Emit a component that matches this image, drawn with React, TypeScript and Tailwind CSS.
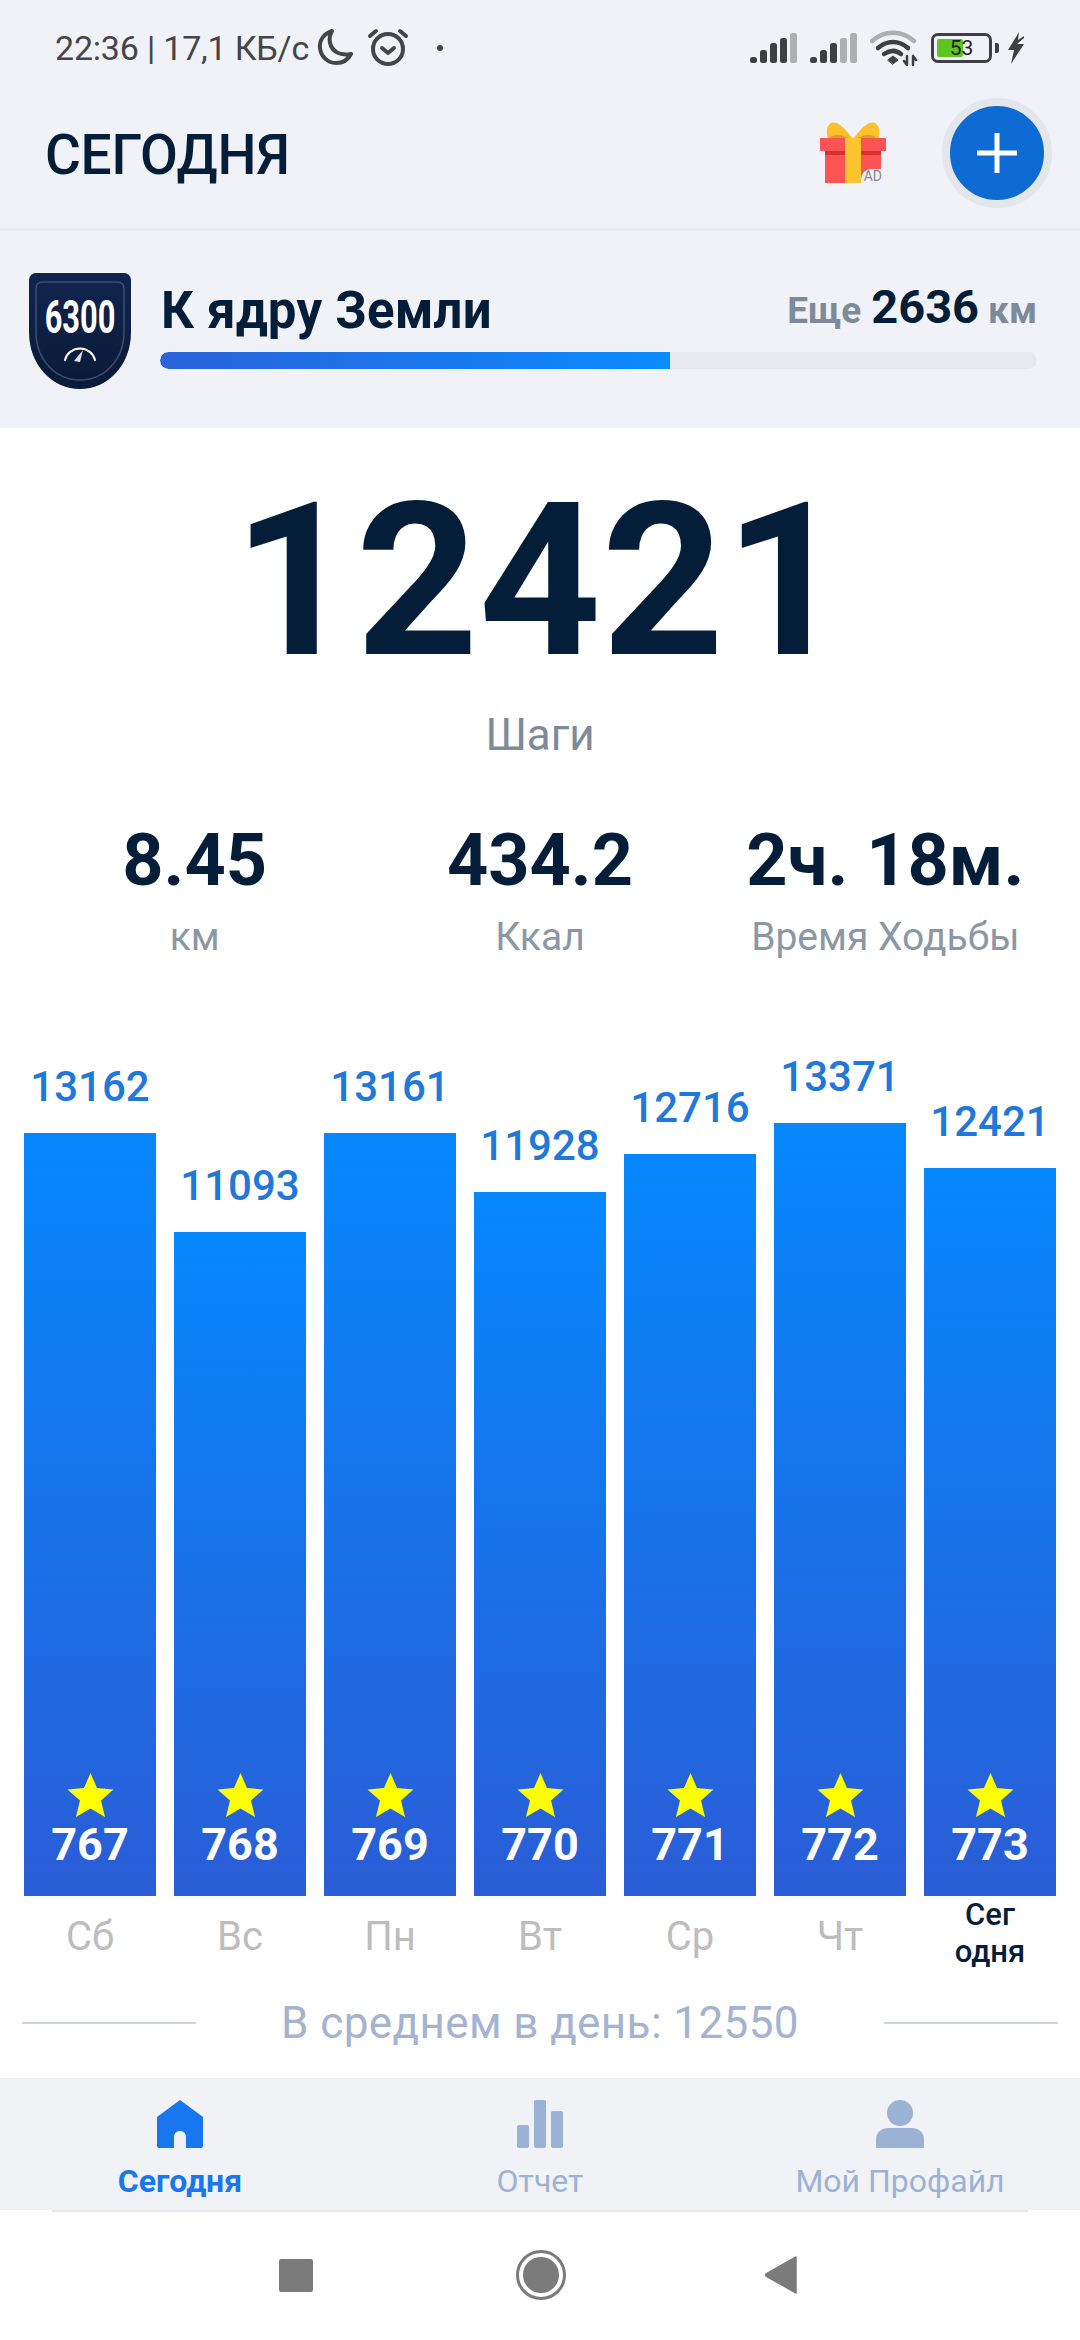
const days = [
  { label: "Сб", steps: 13162, num: 767 },
  { label: "Вс", steps: 11093, num: 768 },
  { label: "Пн", steps: 13161, num: 769 },
  { label: "Вт", steps: 11928, num: 770 },
  { label: "Ср", steps: 12716, num: 771 },
  { label: "Чт", steps: 13371, num: 772 },
  { label: "Сегодня", steps: 12421, num: 773 },
];

const stats = [
  { value: "8.45", label: "км" },
  { value: "434.2", label: "Ккал" },
  { value: "2ч. 18м.", label: "Время Ходьбы" },
];

function barHeight(steps: number) {
  return Math.round(763 - (13162 - steps) * 0.0478);
}

function Signal({ active }: { active: number }) {
  const heights = [6, 13, 20, 25, 30];
  return (
    <svg width="47" height="32" viewBox="0 0 47 32">
      {heights.map((h, i) => (
        <rect key={h} x={i * 10} y={31 - h} width="7" height={h} rx="2.500" fill={i < active ? "#3d3f42" : "#adafb2"} />
      ))}
    </svg>
  );
}

function StatusBar() {
  return (
    <div className="flex h-[92px] items-center justify-between pl-[55px] pr-[55px] pt-1 text-[#444548]">
      <div className="flex items-center">
        <span className="text-[34px] leading-none tracking-[-0.2px]">22:36 | 17,1 КБ/с</span>
        <svg className="ml-2 mt-[-2px]" width="36" height="38" viewBox="0 0 36 38" fill="none" stroke="#444548" strokeWidth="4">
          <path d="M15 3C6 6 2 13 3 20c1 9 8 15 16 15 7 0 12-3 15-9-10 2-17-2-20-8-2-5-2-10 1-15Z" strokeLinejoin="round" />
        </svg>
        <svg className="ml-[14px] mt-[-2px]" width="42" height="38" viewBox="0 0 42 38" fill="none" stroke="#444548" strokeWidth="4" strokeLinecap="round">
          <circle cx="21" cy="21" r="15" />
          <path d="M15 20l6 5 6-5" strokeLinejoin="round" />
          <path d="M3 8l6-5M39 8l-6-5" />
        </svg>
        <span className="ml-[28px] h-[6px] w-[6px] rounded-full bg-[#444548]" />
      </div>
      <div className="flex items-center">
        <Signal active={4} />
        <span className="ml-[13px]"><Signal active={3} /></span>
        <svg className="ml-[13px]" width="48" height="36" viewBox="0 0 48 36" fill="none" strokeLinecap="round">
          <path d="M2 11C14 0 32 0 44 11" stroke="#adafb2" strokeWidth="4.500" />
          <path d="M8 18c9-8 21-8 30 0" stroke="#3d3f42" strokeWidth="4.500" />
          <path d="M14 24c6-4 12-4 17 0" stroke="#3d3f42" strokeWidth="4.500" />
          <path d="M18 30l5-4 5 4-5 4z" fill="#3d3f42" stroke="#3d3f42" strokeWidth="1" />
          <path d="M37 26v9M43 35v-9M34 31l3 4M46 30l-3-4" stroke="#3d3f42" strokeWidth="2.500" />
        </svg>
        <div className="relative ml-[13px] flex h-[30px] w-[61px] items-center rounded-[7px] border-[3px] border-[#3d3f42] p-[3px]">
          <div className="h-full w-[26px] rounded-[2px] bg-[#5fc322]" />
          <span className="absolute inset-0 flex items-center justify-center text-[21px] leading-none text-[#222]">53</span>
        </div>
        <span className="ml-[3px] h-[10px] w-[4px] rounded-r-[2px] bg-[#3d3f42]" />
        <svg className="ml-[8px]" width="18" height="32" viewBox="0 0 18 32">
          <path d="M12 0 1 18h6L4 32 17 12h-7l7-6V4l-6 4z" fill="#3d3f42" />
        </svg>
      </div>
    </div>
  );
}

function Gift() {
  return (
    <div className="relative h-[62px] w-[66px]">
      <svg width="66" height="62" viewBox="0 0 66 62">
        <path d="M33 18C24 6 17 0 11 2 6 5 6 12 8 18Z" fill="#fcc02d" />
        <path d="M33 18C42 6 49 0 55 2c5 3 5 10 3 16Z" fill="#fcc02d" />
        <path d="M9 18c2-4 10-6 17-2l7 2H9ZM57 18c-2-4-10-6-17-2l-7 2h24Z" fill="#e0a021" />
        <rect x="5" y="30" width="56" height="32" fill="#fc5454" />
        <rect x="5" y="30" width="56" height="4" fill="#d9302f" />
        <rect x="0" y="17" width="66" height="13" fill="#fc5454" />
        <rect x="25" y="17" width="16" height="45" fill="#fcc42f" />
      </svg>
      <span className="absolute bottom-0 right-[4px] rounded-tl-[10px] bg-[#f0f2f7] pl-[3px] text-[14px] leading-[14px] text-[#888]">AD</span>
    </div>
  );
}

function Header() {
  return (
    <div className="flex h-[139px] items-start justify-between border-b-[3px] border-[#e9ebef] pl-[45px] pr-[28px]">
      <h1 className="mt-[35px] text-[55px] font-medium leading-[56px] tracking-[-0.3px] text-[#041e3a]">СЕГОДНЯ</h1>
      <div className="flex items-start">
        <div className="mt-[29px]">
          <Gift />
        </div>
        <button className="ml-[56px] mt-[6px] flex h-[110px] w-[110px] items-center justify-center rounded-full border-[8px] border-[#e3e6ea] bg-[#0f6bd4]">
          <svg width="40" height="40" viewBox="0 0 40 40">
            <path d="M17.500 0h5v17.500H40v5H22.500V40h-5V22.500H0v-5h17.500z" fill="#fff" />
          </svg>
        </button>
      </div>
    </div>
  );
}

function Shield() {
  return (
    <svg width="104" height="116" viewBox="0 0 104 116">
      <defs>
        <linearGradient id="shield" x1="0" y1="0" x2="0" y2="1">
          <stop offset="0" stopColor="#10244f" />
          <stop offset="1" stopColor="#0a1a38" />
        </linearGradient>
      </defs>
      <path d="M8 0h88a7 7 0 0 1 7 7v52c0 34-24 57-51 57S1 93 1 59V7a7 7 0 0 1 7-7Z" fill="url(#shield)" />
      <path d="M14 9h76a6 6 0 0 1 6 6v44c0 28-20 48-44 48S8 87 8 59V15a6 6 0 0 1 6-6Z" fill="none" stroke="#3f4e70" strokeWidth="1.500" />
      <text transform="translate(52 60) scale(0.67 1)" textAnchor="middle" fill="#fff" fontSize="46" fontWeight="700" fontFamily="Roboto, sans-serif">6300</text>
      <path d="M37 87a15.500 15.500 0 0 1 30 0" fill="none" stroke="#fff" strokeWidth="2" strokeLinecap="round" />
      <path d="M46 88l9-11-3 12z" fill="#dfe3ea" />
    </svg>
  );
}

function Goal() {
  return (
    <div className="flex h-[197px] items-start pl-[28px] pr-[43px] pt-[42px]">
      <Shield />
      <div className="ml-[28px] flex-1">
        <div className="flex h-[74px] items-center justify-between">
          <span className="ml-[1px] mt-[1px] text-[51px] font-bold leading-none tracking-[0.2px] text-[#041e3a]">К ядру Земли</span>
          <span className="mt-[1px] flex items-baseline font-bold text-[#7d8a99]">
            <span className="text-[37px]">Еще</span>
            <span className="ml-[10px] text-[47px] leading-none text-[#041e3a]">2636</span>
            <span className="ml-[9px] text-[37px]">км</span>
          </span>
        </div>
        <div className="mt-[5px] h-[17px] w-full overflow-hidden rounded-full bg-[#e5e8ec]">
          <div className="h-full w-[510px] rounded-l-full bg-linear-to-r/srgb from-[#2a62da] to-[#0a8cff]" />
        </div>
      </div>
    </div>
  );
}

function Star() {
  return (
    <svg width="47" height="44" viewBox="0 0 46 44">
      <path d="M23 0l6.500 15 16.500 1.500-12.500 11 4 16.500-14.500-8.500-14.500 8.500 4-16.500L0 16.500 16.500 15z" fill="#ffff00" strokeLinejoin="round" />
    </svg>
  );
}

function Chart() {
  return (
    <div className="mt-[91px] flex items-end gap-[18px] pl-[24px] pr-[24px]">
      {days.map((d) => (
        <div key={d.num} className="flex w-[132px] flex-col items-center">
          <span className="mb-[23px] text-[42px] font-medium leading-[47px] text-[#1f78dc]">{d.steps}</span>
          <div
            className="flex w-full flex-col items-center justify-end bg-linear-to-b/srgb from-[#0688fc] to-[#2a5dd6] pb-[27px]"
            style={{ height: barHeight(d.steps) }}
          >
            <Star />
            <span className="mt-[4px] text-[45px] font-bold leading-[48px] text-white">{d.num}</span>
          </div>
        </div>
      ))}
    </div>
  );
}

function DayLabels() {
  return (
    <div className="flex h-[88px] gap-[18px] pl-[24px] pr-[24px]">
      {days.map((d) =>
        d.label === "Сегодня" ? (
          <div key={d.num} className="flex w-[132px] flex-col items-center text-[31px] font-medium leading-[37px] text-[#041e3a]">
            <span>Сег</span>
            <span>одня</span>
          </div>
        ) : (
          <div key={d.num} className="w-[132px] pt-[16px] text-center text-[40px] leading-[50px] text-[#bdbdbd]">
            {d.label}
          </div>
        ),
      )}
    </div>
  );
}

function Average() {
  return (
    <div className="mt-[12px] flex h-[54px] items-center justify-between pl-[22px] pr-[22px]">
      <div className="h-[2px] w-[174px] bg-[#c9d4e4]" />
      <span className="text-[44px] leading-none tracking-[0.4px] text-[#a3b3d1]">В среднем в день: 12550</span>
      <div className="h-[2px] w-[174px] bg-[#c9d4e4]" />
    </div>
  );
}

function BottomNav() {
  return (
    <nav className="grid h-[132px] grid-cols-3 bg-[#f0f2f5] pt-[22px]">
      <div className="flex flex-col items-center">
        <svg width="46" height="48" viewBox="0 0 46 48">
          <path d="M23 0 46 17v29a2 2 0 0 1-2 2H29V37c0-8-12-8-12 0v11H2a2 2 0 0 1-2-2V17Z" fill="#1877ee" />
        </svg>
        <span className="mt-[13px] text-[32px] font-bold leading-[40px] text-[#1877ee]">Сегодня</span>
      </div>
      <div className="flex flex-col items-center">
        <svg width="46" height="48" viewBox="0 0 46 48" fill="#9cb2d4">
          <rect x="0" y="25" width="12" height="23" rx="2" />
          <rect x="17" y="0" width="12" height="48" rx="2" />
          <rect x="34" y="11" width="12" height="37" rx="2" />
        </svg>
        <span className="mt-[13px] text-[32px] leading-[40px] text-[#9cb2d4]">Отчет</span>
      </div>
      <div className="flex flex-col items-center">
        <svg width="48" height="48" viewBox="0 0 48 48" fill="#9cb2d4">
          <ellipse cx="24" cy="13" rx="13" ry="13" />
          <path d="M12 28h24c7 0 12 5 12 11v9H0v-9c0-6 5-11 12-11Z" />
        </svg>
        <span className="mt-[13px] text-[32px] leading-[40px] text-[#9cb2d4]">Мой Профайл</span>
      </div>
    </nav>
  );
}

function SystemKeys() {
  return (
    <div className="flex flex-1 flex-col">
      <div className="mx-[52px] h-[2px] bg-[#e6e8eb]" />
      <div className="flex flex-1 items-center pb-[2px] pl-[279px]">
        <div className="h-[33px] w-[34px] rounded-[2px] bg-[#7b7b7b]" />
        <svg className="ml-[203px]" width="50" height="50" viewBox="0 0 50 50">
          <circle cx="25" cy="25" r="23.500" fill="none" stroke="#7b7b7b" strokeWidth="3" />
          <circle cx="25" cy="25" r="18" fill="#7b7b7b" />
        </svg>
        <svg className="ml-[198px]" width="34" height="38" viewBox="0 0 34 38">
          <path d="M32 1v36L2 20a2 2 0 0 1 0-2z" fill="#7b7b7b" stroke="#7b7b7b" strokeWidth="1.500" strokeLinejoin="round" />
        </svg>
      </div>
    </div>
  );
}

export default function App() {
  return (
    <div className="flex h-[2340px] w-[1080px] flex-col overflow-hidden bg-white font-[family-name:Roboto,sans-serif]">
      <div className="bg-[#f0f2f7]">
        <StatusBar />
        <Header />
        <Goal />
      </div>
      <main className="flex flex-col bg-white">
        <div className="flex flex-col items-center pt-[33px]">
          <span className="text-[214px] font-bold leading-[240px] text-[#041e3a]">12421</span>
          <span className="mt-[9px] text-[44px] leading-[50px] text-[#7d8a99]">Шаги</span>
        </div>
        <div className="mt-[61px] grid grid-cols-3 pl-[22px] pr-[22px]">
          {stats.map((s) => (
            <div key={s.label} className="flex flex-col items-center">
              <span className="whitespace-nowrap text-[72px] font-bold leading-[80px] text-[#041e3a]">{s.value}</span>
              <span className="mt-[11px] text-[39px] leading-[50px] text-[#8b97a5]">{s.label}</span>
            </div>
          ))}
        </div>
        <Chart />
        <DayLabels />
        <Average />
      </main>
      <div className="mt-[28px]">
        <BottomNav />
      </div>
      <SystemKeys />
    </div>
  );
}
